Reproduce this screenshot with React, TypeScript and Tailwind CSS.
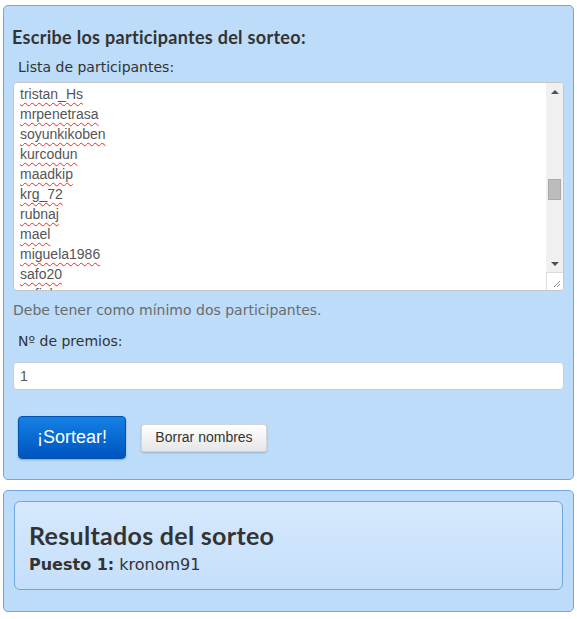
import React from 'react';

const PARTICIPANTS = [
  'tristan_Hs',
  'mrpenetrasa',
  'soyunkikoben',
  'kurcodun',
  'maadkip',
  'krg_72',
  'rubnaj',
  'mael',
  'miguela1986',
  'safo20',
  'sofiah',
];

const labelFont = { fontFamily: '"DejaVu Sans", Verdana, sans-serif' };

function FakeScrollbar() {
  return (
    <div className="flex w-[17px] flex-col bg-[#f0f0f0]">
      <div className="flex h-[17px] items-center justify-center">
        <div className="h-0 w-0 border-x-[4px] border-b-[4px] border-x-transparent border-b-[#505050]" />
      </div>
      <div className="relative flex-1">
        <div className="absolute left-[2px] right-[2px] top-[79px] h-[21px] border border-[#a8a8a8] bg-[#bcbcbc]" />
      </div>
      <div className="flex h-[17px] items-center justify-center">
        <div className="h-0 w-0 border-x-[4px] border-t-[4px] border-x-transparent border-t-[#505050]" />
      </div>
      <div className="relative h-[18px] border-t border-l border-[#dcdcdc] bg-white">
        <svg className="absolute bottom-[2px] right-[2px]" width="8" height="8" viewBox="0 0 8 8">
          <path d="M7 1 L1 7 M7 4 L4 7" stroke="#8a8a8a" strokeWidth="1" />
        </svg>
      </div>
    </div>
  );
}

export default function App() {
  return (
    <div className="min-h-[619px] bg-white px-[3px] pt-[5px]">
      {/* Form panel */}
      <div className="rounded-[5px] border border-[#6ea8de] bg-[#bcdcf9] px-[9px] pt-[21px] pb-[20px]">
        <h3
          className="ml-[-1px] text-[18px] font-bold leading-[20px] tracking-[0.3px] text-[#333]"
          style={{ fontFamily: 'Lato, "Open Sans", sans-serif' }}
        >
          Escribe los participantes del sorteo:
        </h3>
        <div className="mt-[11px] pl-[5px] text-[14px] leading-[18px] text-[#333]" style={labelFont}>
          Lista de participantes:
        </div>

        <div className="mt-[6px] flex h-[209px] overflow-hidden rounded-[4px] border border-[#c6c6c6] bg-white">
          <div
            className="flex-1 overflow-hidden px-[6px] pt-[1px] text-[14px] leading-[20px] text-[#555]"
            style={{ fontFamily: '"Liberation Sans", Arial, sans-serif' }}
          >
            {PARTICIPANTS.map((name) => (
              <div key={name}>
                <span className="underline decoration-[#e0302a] decoration-wavy decoration-[1px] underline-offset-[3px]">
                  {name}
                </span>
              </div>
            ))}
          </div>
          <FakeScrollbar />
        </div>

        <p className="mt-[10px] text-[14px] leading-[18px] text-[#6b6b6b]" style={labelFont}>
          Debe tener como mínimo dos participantes.
        </p>

        <div className="mt-[13px] pl-[5px] text-[14px] leading-[18px] text-[#333]" style={labelFont}>
          Nº de premios:
        </div>
        <div
          className="mt-[12px] flex h-[28px] items-center rounded-[4px] border border-[#c6ced8] bg-white px-[6px] text-[14px] text-[#555]"
          style={{ fontFamily: '"Liberation Sans", Arial, sans-serif' }}
        >
          1
        </div>

        <div className="mt-[26px] flex items-center gap-[15px] pl-[5px]" style={{ fontFamily: '"Liberation Sans", Arial, sans-serif' }}>
          <button className="h-[43px] w-[108px] rounded-[4px] border border-[#0051ad] bg-gradient-to-b from-[#1681e4] to-[#0054c0] text-[18px] text-white shadow-[0_1px_2px_rgba(0,0,0,0.25)]">
            ¡Sortear!
          </button>
          <button className="h-[28px] w-[126px] rounded-[3px] border border-[#d4d4d4] bg-gradient-to-b from-white to-[#e6e6e6] text-[14px] text-[#333] shadow-[0_1px_2px_rgba(0,0,0,0.2)]">
            Borrar nombres
          </button>
        </div>
      </div>

      {/* Results panel */}
      <div className="mt-[10px] rounded-[5px] border border-[#6ea8de] bg-[#bcdcf9] px-[10px] pt-[10px] pb-[21px]">
        <div className="h-[89px] rounded-[6px] border border-[#6ea8de] bg-gradient-to-b from-[#d6e9fd] to-[#c5dffb] px-[14px] pt-[18px]">
          <h2
            className="text-[25px] font-bold leading-[30px] tracking-[0.3px] text-[#333]"
            style={{ fontFamily: 'Lato, "Open Sans", sans-serif' }}
          >
            Resultados del sorteo
          </h2>
          <div className="mt-[5px] text-[16px] leading-[20px] text-[#333]" style={labelFont}>
            <b className="font-bold">Puesto 1:</b> kronom91
          </div>
        </div>
      </div>
    </div>
  );
}
